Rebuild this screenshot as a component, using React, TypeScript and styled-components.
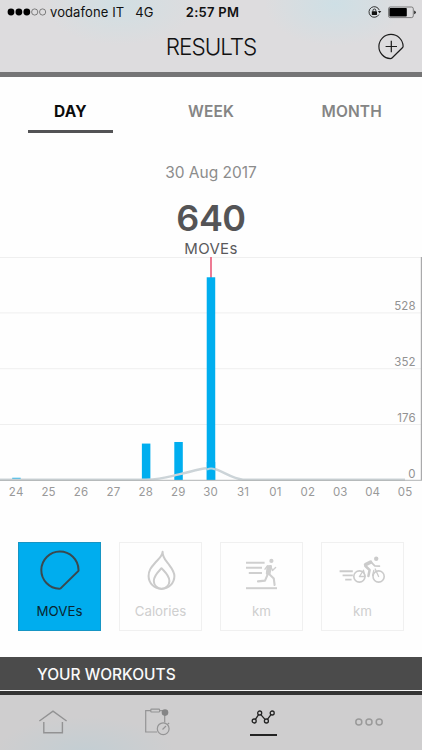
import { JSX, ReactNode } from 'react';
import styled, { createGlobalStyle } from 'styled-components';

type Metric = {
  label: string;
  icon: ReactNode;
  active?: boolean;
};

const PERIODS = ['DAY', 'WEEK', 'MONTH'];

const DAYS = ['24', '25', '26', '27', '28', '29', '30', '31', '01', '02', '03', '04', '05'];
const MOVES = [7, 0, 0, 0, 115, 120, 640, 0, 0, 0, 0, 0, 0];
const TICKS = [528, 352, 176, 0];

const CHART_HEIGHT = 223;
const CHART_MAX = 704;
const DAY_STEP = 32.42;

const METRICS: Metric[] = [
  { label: 'MOVEs', icon: <MovesIcon />, active: true },
  { label: 'Calories', icon: <FlameIcon /> },
  { label: 'km', icon: <RunIcon /> },
  { label: 'km', icon: <BikeIcon /> },
];

export default function App(): JSX.Element {
  return (
    <Screen>
      <GlobalStyle />
      <Header>
        <StatusBar />
        <TitleRow>
          <span />
          <Title>RESULTS</Title>
          <AddButton aria-label="Add">
            <AddIcon />
          </AddButton>
        </TitleRow>
      </Header>

      <Tabs>
        {PERIODS.map((period, index) => (
          <Tab key={period} $active={index === 0}>
            {period}
          </Tab>
        ))}
      </Tabs>

      <Summary>
        <SummaryDate>30 Aug 2017</SummaryDate>
        <SummaryValue>640</SummaryValue>
        <SummaryUnit>MOVEs</SummaryUnit>
      </Summary>

      <ResultsChart />

      <Metrics>
        {METRICS.map((metric, index) => (
          <MetricCard key={index} $active={metric.active}>
            <MetricIcon>{metric.icon}</MetricIcon>
            <MetricLabel>{metric.label}</MetricLabel>
          </MetricCard>
        ))}
      </Metrics>

      <Workouts>YOUR WORKOUTS</Workouts>

      <BottomNav>
        <NavItem><HomeIcon /></NavItem>
        <NavItem><TrainingIcon /></NavItem>
        <NavItem $active><ResultsIcon /></NavItem>
        <NavItem><MoreIcon /></NavItem>
      </BottomNav>
    </Screen>
  );
}

function StatusBar(): JSX.Element {
  return (
    <Status>
      <StatusLeft>
        <svg width="40" height="10" viewBox="0 0 40 10">
          {[0, 1, 2, 3, 4].map((dot) => (
            <circle
              key={dot}
              cx={4 + dot * 7.9}
              cy="5"
              r={dot < 3 ? 3.4 : 3.1}
              fill={dot < 3 ? '#000' : 'none'}
              stroke={dot < 3 ? 'none' : '#555'}
              strokeWidth="0.7"
            />
          ))}
        </svg>
        <Carrier>vodafone IT</Carrier>
        <Network>4G</Network>
      </StatusLeft>
      <Clock>2:57 PM</Clock>
      <StatusRight>
        <svg width="14" height="14" viewBox="0 0 14 14" fill="none" stroke="#222">
          <path d="M10.9 9.6A5.3 5.3 0 1 1 11.3 5.2" strokeWidth="0.9" />
          <path d="M9.9 6.1h3.4l-1.7 2.2z" fill="#222" stroke="none" />
          <rect x="3.8" y="6.3" width="5.2" height="3.7" rx="0.4" fill="#111" stroke="none" />
          <path d="M5 6.4V5.4a1.4 1.4 0 0 1 2.8 0v1" strokeWidth="0.9" />
        </svg>
        <svg width="28" height="13" viewBox="0 0 28 13">
          <rect x="0.5" y="1" width="24.8" height="10.6" rx="1.8" fill="none" stroke="#555" strokeWidth="0.7" />
          <rect x="1.4" y="2" width="17.4" height="8.6" rx="0.8" fill="#000" />
          <path d="M26.2 4.4q1.6.6 1.6 1.9t-1.6 1.9z" fill="#222" />
        </svg>
      </StatusRight>
    </Status>
  );
}

function ResultsChart(): JSX.Element {
  return (
    <Chart>
      <svg width="422" height={CHART_HEIGHT + 1} viewBox={`0 0 422 ${CHART_HEIGHT + 1}`}>
        {[0.5, 55.9, 111.7, 167.5].map((y) => (
          <line key={y} x1="0" x2="421" y1={y} y2={y} stroke="#efefef" />
        ))}
        <line x1="421.4" x2="421.4" y1="0" y2={CHART_HEIGHT} stroke="#aaaaac" strokeWidth="1.2" />
        <line x1="211" x2="211" y1="0" y2="22" stroke="#ec6c88" strokeWidth="1.8" />
        {MOVES.map((value, index) => {
          const height = (value / CHART_MAX) * CHART_HEIGHT;
          return (
            <rect
              key={index}
              x={12.2 + index * DAY_STEP}
              y={CHART_HEIGHT - height}
              width="8.5"
              height={height}
              fill="#00aeef"
            />
          );
        })}
        {/* average curve, dips behind the bar of the selected day */}
        <path
          d="M0 222.7H146C163 222.4 171 219 179 217.4C190 215 199 211.8 207 211.3"
          fill="none"
          stroke="#ccd4d8"
          strokeWidth="2.4"
        />
        <path
          d="M207 211.3Q211 210.6 215.5 212.2C225 215.5 233 222 243 222.7H405"
          fill="none"
          stroke="#ccd4d8"
          strokeWidth="2.4"
        />
        <rect x="206.8" y="205" width="8.4" height="18" fill="#00aeef" />
        <path d="M207 212.4Q211 210.6 215.2 212.4" fill="none" stroke="#b4d3df" strokeWidth="2.2" />
        <line x1="0" x2="422" y1="223.3" y2="223.3" stroke="#b1b3b5" />
        {TICKS.map((tick, index) => (
          <TickText key={tick} x="415.7" y={53.4 + index * 55.8} textAnchor="end">
            {tick}
          </TickText>
        ))}
      </svg>
      <DayLabels>
        {DAYS.map((day) => (
          <span key={day}>{day}</span>
        ))}
      </DayLabels>
    </Chart>
  );
}

function AddIcon(): JSX.Element {
  return (
    <svg width="28" height="28" viewBox="0 0 28 28" fill="none" stroke="#1c1c1c" strokeWidth="1.2">
      <path d="M26.1 13.2A12.1 12.1 0 1 0 13.4 25.6Q14.4 25.6 15 25L25.4 14.8Q26.2 14 26.1 13.2Z" />
      <path d="M14.3 7.8v11.4M8.6 13.5h11.4" />
    </svg>
  );
}

function MovesIcon(): JSX.Element {
  return (
    <svg width="42" height="42" viewBox="0 0 42 42" fill="none" stroke="#3a494f" strokeWidth="2">
      <path d="M39.5 19.6A18.6 18.6 0 1 0 20.3 38.7L21.6 38.4L39.2 21.2Q39.7 20.5 39.5 19.6Z" />
    </svg>
  );
}

function FlameIcon(): JSX.Element {
  return (
    <svg width="42" height="42" viewBox="0 0 42 42" fill="none" stroke="#cbcbcb" strokeWidth="2" strokeLinejoin="round">
      <path d="M22.6 1.8C22.4 7.5 25.5 10 28.5 14C31.5 18 34.4 21.5 34.4 26A12.9 12.9 0 0 1 8.6 26C8.6 20.5 11 17.5 15 13C18.5 9 22.3 6.6 22.6 1.8Z" />
      <path d="M21.5 18.2C18.5 21.5 13.8 25.5 13.8 30.9A7.8 7.8 0 0 0 29.4 30.9C29.4 25.5 25 22 21.5 18.2Z" />
    </svg>
  );
}

function RunIcon(): JSX.Element {
  return (
    <svg width="42" height="42" viewBox="0 0 42 42" fill="none" stroke="#cfcfcf" strokeWidth="2.1" strokeLinecap="round" strokeLinejoin="round">
      <path d="M5 12.7H23.6M5 17.8H21M7.8 23H21" strokeLinecap="butt" />
      <path d="M5 38.2H36" strokeLinecap="butt" strokeWidth="2" />
      <circle cx="30.4" cy="10.9" r="2.1" fill="#cfcfcf" stroke="none" />
      <path d="M26.8 16.4L29.8 16.2L28.4 23.6L26 23.6Z" fill="#cfcfcf" strokeWidth="2.4" />
      <path d="M26.4 15.9L24 19.2M29.8 16.5L31.5 20.5L34.6 17.6" strokeWidth="1.4" />
      <path d="M26.6 24.6L24 30.6L17 31.4M28.6 24.6L32.8 28.6L33.6 35" />
    </svg>
  );
}

function BikeIcon(): JSX.Element {
  return (
    <svg width="48" height="42" viewBox="0 0 48 42" fill="none" stroke="#cbcbcb" strokeLinecap="round" strokeLinejoin="round">
      <path d="M0.6 21.2H13.8M3.6 25.4H13.8M6.2 29.6H12.6" strokeWidth="1.9" strokeLinecap="butt" />
      <circle cx="20.4" cy="26.5" r="5.6" strokeWidth="1.6" />
      <circle cx="39.6" cy="26.5" r="5.6" strokeWidth="1.6" />
      <circle cx="37.2" cy="8.7" r="2.2" fill="#cbcbcb" stroke="none" />
      <path d="M26.6 14.6L31.6 12.2" strokeWidth="3.6" />
      <path d="M32.6 12.6L35.8 15.8L40.4 16.2" strokeWidth="1.8" />
      <path d="M26.4 16L30.6 20L29.4 26" strokeWidth="2.5" />
      <path d="M20.4 26.5L24.5 20.3L26 26.5H20.4M33.6 25.4L34.8 20.4M36.2 19L39.6 26.5" strokeWidth="1.3" />
    </svg>
  );
}

function HomeIcon(): JSX.Element {
  return (
    <svg width="30" height="26" viewBox="0 0 30 26" fill="none" stroke="#929293" strokeWidth="1.4">
      <path d="M1.4 12L15 2.2L28.6 12" />
      <path d="M5.8 13V23.8H24.4V13" />
    </svg>
  );
}

function TrainingIcon(): JSX.Element {
  return (
    <svg width="28" height="28" viewBox="0 0 28 28" fill="none" stroke="#949495" strokeWidth="1.2">
      <path d="M7 2.6H1.7V24H13.2M15.6 2.6H20.7V14.6" />
      <rect x="6.8" y="1.2" width="8.8" height="2.8" rx="0.8" />
      <circle cx="21" cy="4.6" r="3.3" fill="#858586" stroke="none" />
      <circle cx="19.2" cy="20.7" r="5.9" />
      <path d="M18.5 21.5L22 18M23.8 16L25.2 15" />
    </svg>
  );
}

function ResultsIcon(): JSX.Element {
  return (
    <svg width="26" height="16" viewBox="0 0 26 16" fill="none" stroke="#232323" strokeWidth="1.3">
      <path d="M4.4 10.4L7.6 5.6M9.8 5.6L14 10.4M16.4 10.4L20 5.6" />
      <circle cx="3.2" cy="12" r="2" />
      <circle cx="8.7" cy="4" r="2" />
      <circle cx="15.4" cy="12" r="2" />
      <circle cx="21.2" cy="4" r="2" />
    </svg>
  );
}

function MoreIcon(): JSX.Element {
  return (
    <svg width="30" height="10" viewBox="0 0 30 10" fill="none" stroke="#9a9a9a" strokeWidth="1.5">
      <circle cx="4.8" cy="5" r="3" />
      <circle cx="15" cy="5" r="3" />
      <circle cx="25.2" cy="5" r="3" />
    </svg>
  );
}

const GlobalStyle = createGlobalStyle`
  * {
    box-sizing: border-box;
  }

  body {
    margin: 0;
    background: #fefefe;
    font-family: Inter, 'Liberation Sans', sans-serif;
  }

  svg {
    display: block;
    flex-shrink: 0;
  }
`;

const Screen = styled.div`
  display: flex;
  flex-direction: column;
  width: 422px;
  height: 750px;
  overflow: hidden;
  background: #fefefe;
`;

const Header = styled.header`
  height: 77px;
  border-bottom: 5px solid #757576;
  background:
    radial-gradient(ellipse 75px 40px at 120px 5px, #d1dfe3, transparent),
    radial-gradient(ellipse 70px 42px at 335px 4px, #cedfe5, transparent),
    #dddcde;
`;

const Status = styled.div`
  display: grid;
  grid-template-columns: 1fr auto 1fr;
  align-items: center;
  height: 24px;
  padding: 0 6px 0 7px;
  font-size: 13px;
  color: #111;
`;

const StatusLeft = styled.div`
  display: flex;
  align-items: center;
`;

const Carrier = styled.span`
  margin-left: 3px;
  letter-spacing: 0.1px;
`;

const Network = styled.span`
  margin-left: 11px;
`;

const Clock = styled.span`
  padding-left: 2px;
  font-weight: 600;
  letter-spacing: 0.25px;
`;

const StatusRight = styled.div`
  display: flex;
  justify-content: flex-end;
  align-items: center;
  gap: 6px;
`;

const TitleRow = styled.div`
  display: grid;
  grid-template-columns: 1fr auto 1fr;
  align-items: center;
  height: 45px;
  padding: 0 17px;
`;

const Title = styled.h1`
  margin: 0;
  font-size: 22.5px;
  font-weight: 300;
  letter-spacing: -1px;
  color: #111;
`;

const AddButton = styled.button`
  justify-self: end;
  padding: 0;
  border: 0;
  background: none;
`;

const Tabs = styled.nav`
  display: grid;
  grid-template-columns: repeat(3, 1fr);
  height: 56px;
`;

const Tab = styled.div<{ $active: boolean }>`
  justify-self: center;
  width: 85px;
  height: 56px;
  padding-top: 13px;
  border-bottom: 3px solid ${({ $active }) => ($active ? '#535355' : 'transparent')};
  font-size: 15.5px;
  font-weight: ${({ $active }) => ($active ? 700 : 600)};
  line-height: 43px;
  letter-spacing: 0.1px;
  text-align: center;
  color: ${({ $active }) => ($active ? '#0c0c0c' : '#858585')};
`;

const Summary = styled.section`
  display: flex;
  flex-direction: column;
  align-items: center;
  height: 124px;
  padding-top: 29px;
`;

const SummaryDate = styled.div`
  font-size: 15.5px;
  line-height: 21px;
  color: #8c8c8c;
`;

const SummaryValue = styled.div`
  margin-top: 16px;
  font-size: 36px;
  font-weight: 600;
  line-height: 38px;
  letter-spacing: -0.5px;
  color: #545456;
`;

const SummaryUnit = styled.div`
  margin-top: 3px;
  font-size: 15px;
  line-height: 18px;
  letter-spacing: 0.3px;
  color: #59595b;
`;

const Chart = styled.section`
  height: 285px;
`;

const TickText = styled.text`
  font-size: 11.5px;
  letter-spacing: 0.1px;
  fill: #929292;
`;

const DayLabels = styled.div`
  display: grid;
  grid-template-columns: repeat(13, 32.42px);
  margin-top: 4px;
  font-size: 11.5px;
  line-height: 15px;
  letter-spacing: 0.2px;
  text-align: center;
  color: #999;
`;

const Metrics = styled.section`
  display: grid;
  grid-template-columns: repeat(4, 83px);
  justify-content: space-between;
  height: 115px;
  padding: 0 18px;
`;

const MetricCard = styled.div<{ $active?: boolean }>`
  display: flex;
  flex-direction: column;
  align-items: center;
  height: 89px;
  padding-top: 7px;
  border: 1px solid ${({ $active }) => ($active ? '#1695c4' : '#f0f0f0')};
  background: ${({ $active }) => ($active ? '#00adee' : '#fefefe')};
  color: ${({ $active }) => ($active ? '#0a2530' : '#cfcfcf')};
`;

const MetricIcon = styled.div`
  display: flex;
  justify-content: center;
  height: 42px;
`;

const MetricLabel = styled.div`
  margin-top: 9px;
  font-size: 13.3px;
  line-height: 20px;
`;

const Workouts = styled.h2`
  height: 33px;
  margin: 0;
  padding-left: 37px;
  background: #4b4b4b;
  font-size: 15.5px;
  font-weight: 500;
  line-height: 35px;
  color: #fafafa;
`;

const BottomNav = styled.nav`
  display: grid;
  grid-template-columns: repeat(4, 1fr);
  height: 60px;
  border-top: 1px solid #f4f4f4;
  background:
    linear-gradient(#333 0 4px, transparent 4px),
    radial-gradient(ellipse 90px 36px at 85px 62px, #c3ced3, transparent),
    #cfcecf;
`;

const NavItem = styled.div<{ $active?: boolean }>`
  display: flex;
  justify-content: center;
  align-items: center;
  justify-self: center;
  width: 27px;
  height: 31px;
  margin-top: 15px;
  ${({ $active }) => $active && 'height: 30px; padding-top: 3px; align-items: flex-start; border-bottom: 2px solid #232323;'}
`;
